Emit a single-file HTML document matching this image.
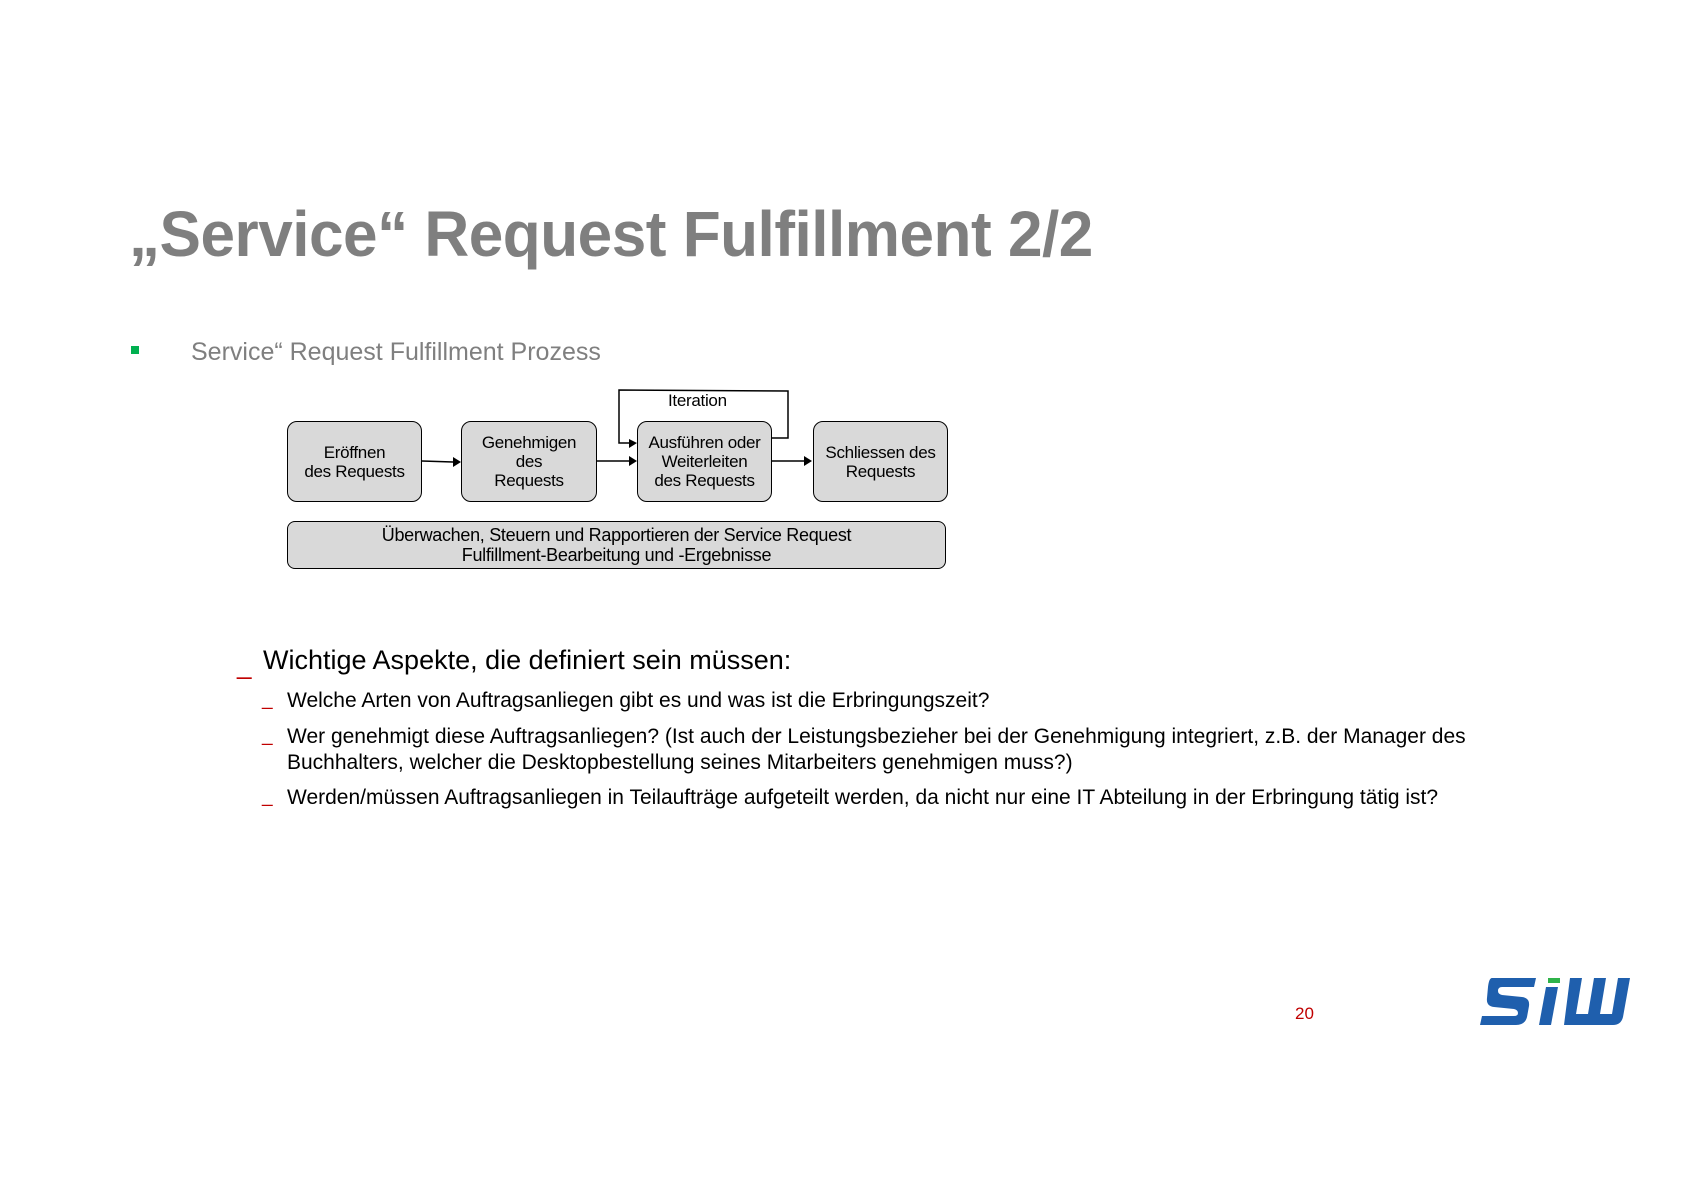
<!DOCTYPE html>
<html><head><meta charset="utf-8"><style>
body{margin:0;width:1683px;height:1190px;background:#fff;position:relative;overflow:hidden;font-family:"Liberation Sans",Arial,sans-serif}
.a{position:absolute;white-space:nowrap}
.box{position:absolute;background:#d9d9d9;border:1.5px solid #000;border-radius:10px;box-sizing:border-box;display:flex;align-items:center;justify-content:center;text-align:center;font-size:17px;line-height:19px;color:#000;letter-spacing:-0.3px}
.d{color:#c00000}
</style></head><body>
<div class="a" style="left:129px;top:197px;font-size:64px;font-weight:bold;color:#7f7f7f;transform:scaleX(0.97);transform-origin:left top;letter-spacing:-0.5px">„Service“ Request Fulfillment 2/2</div>
<div class="a" style="left:131px;top:346px;width:8px;height:8px;background:#00b050"></div>
<div class="a" style="left:191px;top:338px;font-size:25px;color:#7f7f7f">Service“ Request Fulfillment Prozess</div>

<div class="box" style="left:287px;top:421px;width:135px;height:81px">Eröffnen<br>des Requests</div>
<div class="box" style="left:461px;top:421px;width:136px;height:81px">Genehmigen<br>des<br>Requests</div>
<div class="box" style="left:637px;top:421px;width:135px;height:81px">Ausführen oder<br>Weiterleiten<br>des Requests</div>
<div class="box" style="left:813px;top:421px;width:135px;height:81px">Schliessen des<br>Requests</div>
<div class="box" style="left:287px;top:521px;width:659px;height:48px;border-radius:8px;font-size:18px;line-height:20px">Überwachen, Steuern und Rapportieren der Service Request<br>Fulfillment-Bearbeitung und -Ergebnisse</div>
<div class="a" style="left:668px;top:391px;font-size:17px;letter-spacing:-0.3px">Iteration</div>
<svg class="a" style="left:0;top:0" width="1683" height="1190">
<g stroke="#000" stroke-width="1.5" fill="none">
<path d="M422 461 L453 462"/><path d="M597 461 L629 461"/><path d="M772 461 L804 461"/>
<path d="M772 438 L788 438 L788 391 L619 390 L619 443 L629 443"/>
</g>
<g fill="#000">
<path d="M453 457 L461 462 L453 467Z"/><path d="M629 456 L637 461 L629 466Z"/><path d="M804 456 L812 461 L804 466Z"/><path d="M629 439 L637 443 L629 448Z"/>
</g>
</svg>

<div class="a d" style="left:237px;top:650px;font-size:26px">_</div>
<div class="a" style="left:263px;top:645px;font-size:27px;color:#000">Wichtige Aspekte, die definiert sein müssen:</div>
<div class="a d" style="left:262px;top:689px;font-size:19px">_</div>
<div class="a" style="left:287px;top:689px;font-size:21px">Welche Arten von Auftragsanliegen gibt es und was ist die Erbringungszeit?</div>
<div class="a d" style="left:262px;top:725px;font-size:19px">_</div>
<div class="a" style="left:287px;top:724px;font-size:21px;line-height:26px">Wer genehmigt diese Auftragsanliegen? (Ist auch der Leistungsbezieher bei der Genehmigung integriert, z.B. der Manager des<br>Buchhalters, welcher die Desktopbestellung seines Mitarbeiters genehmigen muss?)</div>
<div class="a d" style="left:262px;top:786px;font-size:19px">_</div>
<div class="a" style="left:287px;top:786px;font-size:21px">Werden/müssen Auftragsanliegen in Teilaufträge aufgeteilt werden, da nicht nur eine IT Abteilung in der Erbringung tätig ist?</div>

<div class="a" style="left:1295px;top:1004px;font-size:17px;color:#c00000">20</div>
<svg class="a" style="left:1478px;top:975px" width="156" height="52" viewBox="0 0 156 52">
<g fill="#1f5fad">
<path d="M14 3 L58 3 L56 12 L24 12 Q20 12 20 16 Q20 19 24 20 L44 22 Q52 23 51 31 L49 42 Q47 50 38 50 L2 50 L4 41 L36 41 Q40 41 40 38 Q40 35 36 34 L16 32 Q8 31 9 23 L10 12 Q11 3 14 3Z"/>
<path d="M68 12 L80 12 L73 50 L61 50Z"/>
<path d="M92 3 L104 3 L98 39 L110 39 L116 3 L128 3 L122 39 L134 39 L140 3 L152 3 L145 42 Q143 50 135 50 L86 50Z"/>
</g>
<rect x="70" y="3" width="12" height="5" fill="#2fb34a"/>
</svg>
</body></html>
